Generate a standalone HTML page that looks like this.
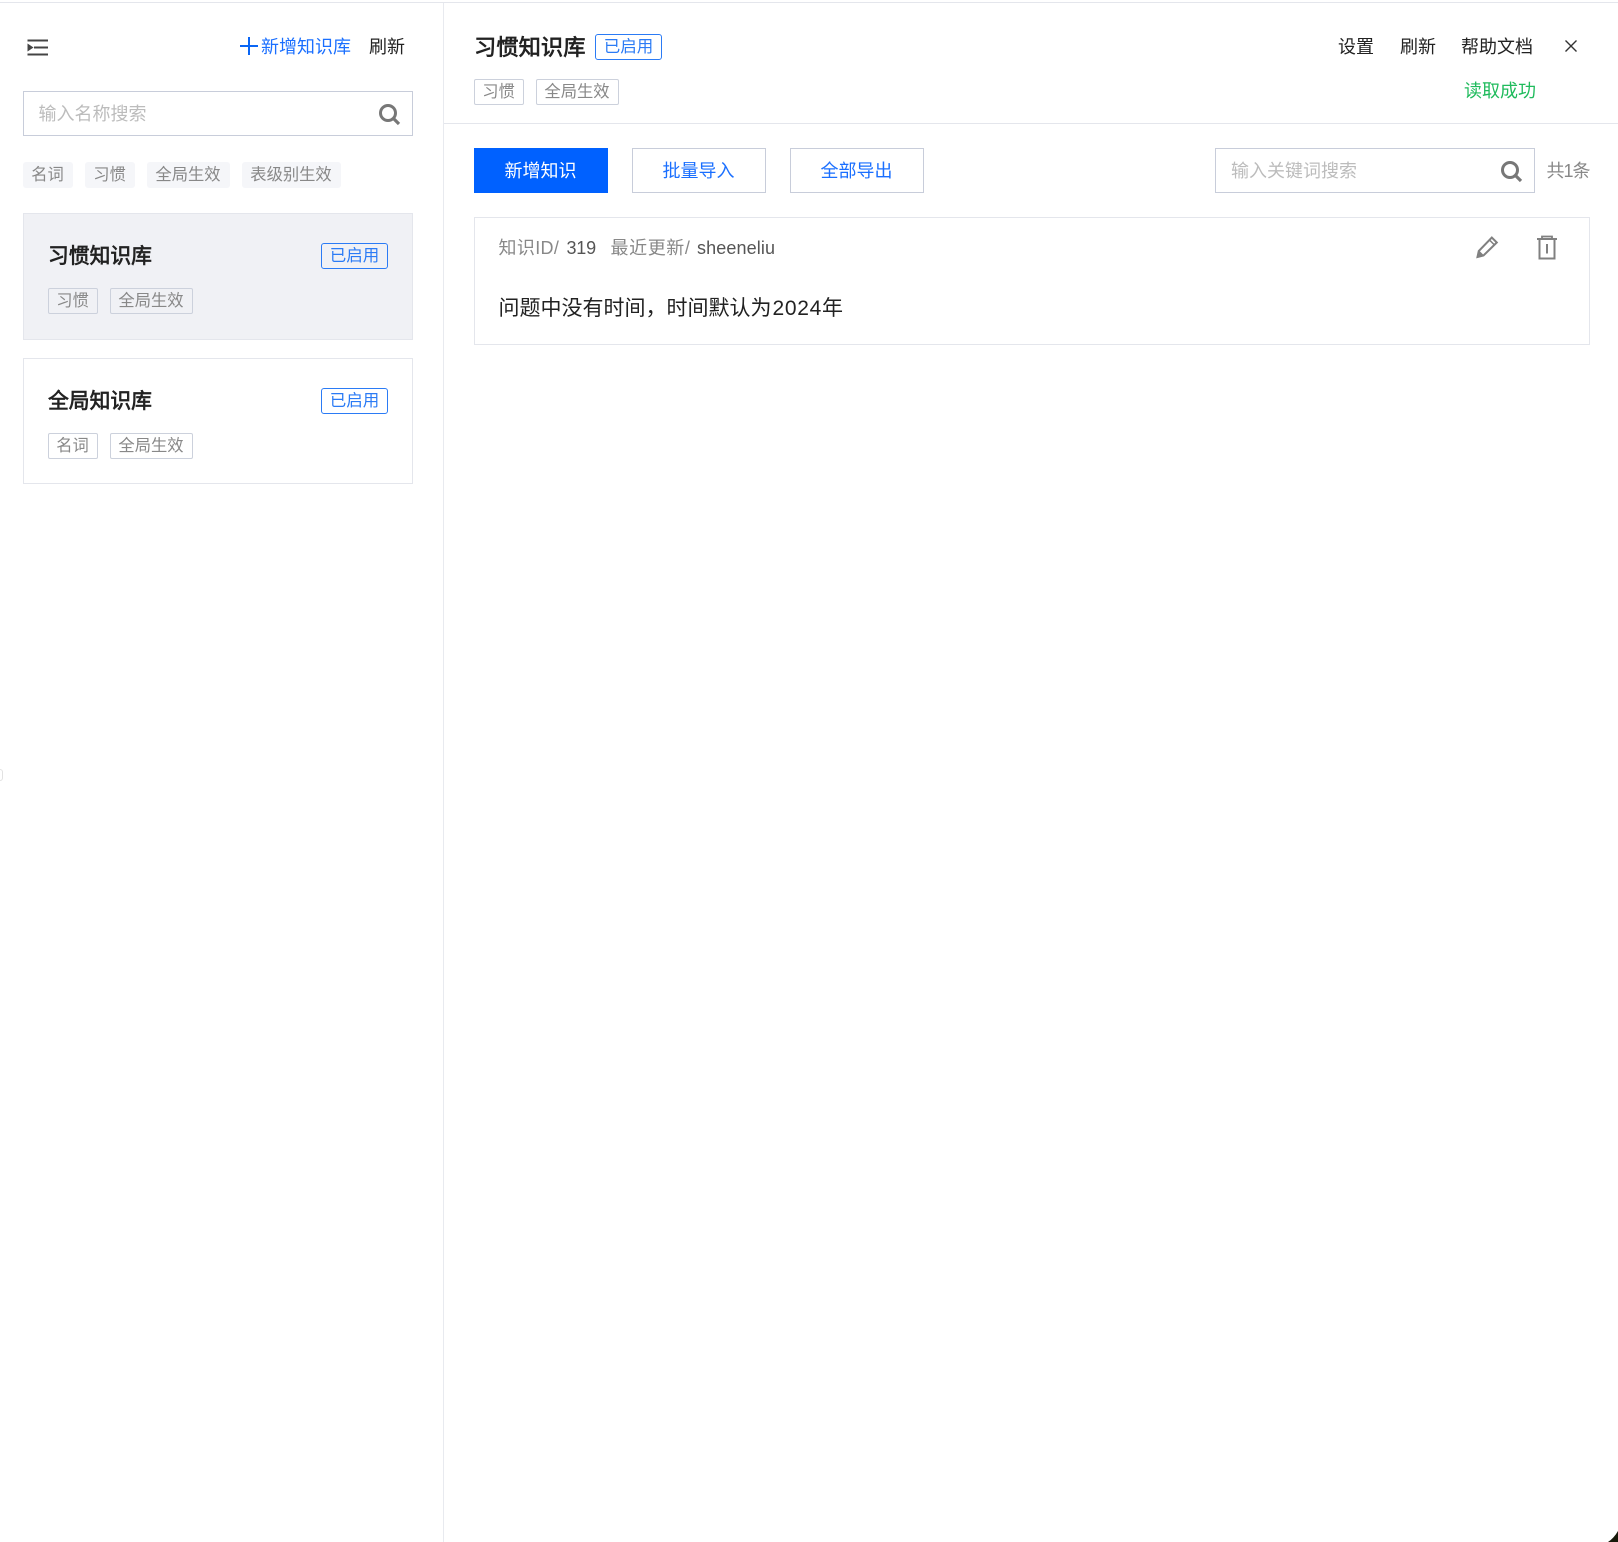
<!DOCTYPE html>
<html lang="zh-CN">
<head>
<meta charset="utf-8">
<title>知识库</title>
<style>
html,body{margin:0;padding:0;width:1618px;height:1542px;overflow:hidden;background:#fff}
body{position:relative;font-family:"Liberation Sans","Noto Sans CJK SC",sans-serif;color:#222}
.a{position:absolute;box-sizing:border-box;white-space:nowrap}
.t{position:absolute;white-space:nowrap}
.box{position:absolute;box-sizing:border-box}
.tag{position:absolute;box-sizing:border-box;height:26px;line-height:24px;font-size:16.3px;color:#888;text-align:center;border:1px solid #ccd1dc;border-radius:2px;white-space:nowrap;padding-right:1px}
.ftag{position:absolute;box-sizing:border-box;height:26px;line-height:26px;font-size:16.3px;color:#888;text-align:center;background:#f5f6f9;border-radius:3px;white-space:nowrap;padding-right:1px}
.badge{position:absolute;box-sizing:border-box;width:67px;height:26px;line-height:24px;font-size:16.5px;color:#2b7bf5;text-align:center;border:1px solid #2b7bf5;border-radius:3px;white-space:nowrap}
.btn{position:absolute;box-sizing:border-box;top:148px;width:134px;height:45px;line-height:44px;font-size:18px;text-align:center;color:#1a6fff;border:1px solid #c8cdda;white-space:nowrap;padding-right:1px}
.ti{font-weight:400;color:#222;line-height:30px;-webkit-text-stroke:.7px #222}
</style>
</head>
<body>
<div class="box" style="left:0;top:2px;width:1618px;height:1px;background:#e4e6ec"></div>
<div class="box" style="left:443px;top:3px;width:1px;height:1539px;background:#e8eaef"></div>
<div class="box" style="left:444px;top:123px;width:1174px;height:1px;background:#e4e6ec"></div>

<svg class="a" style="left:26px;top:38px" width="24" height="20" viewBox="0 0 24 20">
<path d="M1.500 2.500H22M8 9.500H22M1.500 16.500H22" stroke="#444" stroke-width="2" fill="none"/>
<path d="M1.500 5.500L7.500 9.500L1.500 13.500Z" fill="#444"/>
</svg>
<svg class="a" style="left:240px;top:37px" width="18" height="18" viewBox="0 0 18 18"><path d="M9 0V18M0 9H18" stroke="#0a66f5" stroke-width="2" fill="none"/></svg>
<span class="t" style="left:261px;top:33px;font-size:18px;line-height:28px;color:#1a6fff">新增知识库</span>
<span class="t" style="left:369px;top:33px;font-size:18px;line-height:28px;color:#222">刷新</span>

<div class="box" style="left:23px;top:91px;width:390px;height:45px;border:1px solid #c8cdda"></div>
<span class="t" style="left:38.500px;top:101px;font-size:18px;line-height:27px;color:#bcbcbc">输入名称搜索</span>
<svg class="a" style="left:378px;top:103px" width="24" height="24" viewBox="0 0 24 24"><circle cx="10" cy="10" r="7.500" stroke="#777" stroke-width="3" fill="none"/><path d="M15.500 15.500L21 21" stroke="#777" stroke-width="3.200" fill="none"/></svg>

<div class="ftag" style="left:23px;top:162px;width:50px">名词</div>
<div class="ftag" style="left:85px;top:162px;width:50px">习惯</div>
<div class="ftag" style="left:147px;top:162px;width:83px">全局生效</div>
<div class="ftag" style="left:242px;top:162px;width:99px">表级别生效</div>

<div class="box" style="left:23px;top:213px;width:390px;height:127px;background:#f0f1f5;border:1px solid #e4e6ec"></div>
<span class="t ti" style="left:48px;top:242px;font-size:20.800px">习惯知识库</span>
<div class="badge" style="left:321px;top:243px">已启用</div>
<div class="tag" style="left:48px;top:288px;width:50px">习惯</div>
<div class="tag" style="left:110px;top:288px;width:83px">全局生效</div>

<div class="box" style="left:23px;top:358px;width:390px;height:126px;border:1px solid #e4e6ec"></div>
<span class="t ti" style="left:48px;top:387px;font-size:20.800px">全局知识库</span>
<div class="badge" style="left:321px;top:388px">已启用</div>
<div class="tag" style="left:48px;top:433px;width:50px">名词</div>
<div class="tag" style="left:110px;top:433px;width:83px">全局生效</div>

<span class="t ti" style="left:474px;top:33px;font-size:22.300px">习惯知识库</span>
<div class="badge" style="left:595px;top:34px">已启用</div>
<div class="tag" style="left:474px;top:79px;width:50px">习惯</div>
<div class="tag" style="left:536px;top:79px;width:83px">全局生效</div>

<span class="t" style="left:1338px;top:33px;font-size:18px;line-height:28px">设置</span>
<span class="t" style="left:1400px;top:33px;font-size:18px;line-height:28px">刷新</span>
<span class="t" style="left:1461px;top:33px;font-size:18px;line-height:28px">帮助文档</span>
<svg class="a" style="left:1564px;top:39px" width="14" height="14" viewBox="0 0 14 14"><path d="M1.500 1.500L12.500 12.500M12.500 1.500L1.500 12.500" stroke="#333" stroke-width="1.400" fill="none"/></svg>
<span class="t" style="left:1464px;top:77px;font-size:18px;line-height:28px;color:#1fbb5c">读取成功</span>

<div class="box" style="left:474px;top:148px;width:134px;height:45px;background:#0061ff;color:#fff;font-size:18px;line-height:46px;text-align:center;padding-right:1px">新增知识</div>
<div class="btn" style="left:632px">批量导入</div>
<div class="btn" style="left:790px">全部导出</div>

<div class="box" style="left:1215px;top:148px;width:320px;height:45px;border:1px solid #c8cdda"></div>
<span class="t" style="left:1231px;top:158px;font-size:18px;line-height:27px;color:#bcbcbc">输入关键词搜索</span>
<svg class="a" style="left:1500px;top:160px" width="24" height="24" viewBox="0 0 24 24"><circle cx="10" cy="10" r="7.500" stroke="#777" stroke-width="3" fill="none"/><path d="M15.500 15.500L21 21" stroke="#777" stroke-width="3.200" fill="none"/></svg>
<span class="t" style="left:1546.500px;top:158px;font-size:18px;line-height:27px;color:#888;letter-spacing:-1px">共1条</span>

<div class="box" style="left:474px;top:217px;width:1116px;height:128px;border:1px solid #e4e6ec"></div>
<span class="t" style="left:498.500px;top:235px;font-size:18px;line-height:27px;color:#888;letter-spacing:.35px">知识ID/</span>
<span class="t" style="left:566.500px;top:235px;font-size:18px;line-height:27px;color:#555;letter-spacing:-.2px">319</span>
<span class="t" style="left:610.500px;top:235px;font-size:18px;line-height:27px;color:#888;letter-spacing:.6px">最近更新/</span>
<span class="t" style="left:697px;top:235px;font-size:18px;line-height:27px;color:#555;letter-spacing:.12px">sheeneliu</span>
<span class="t" style="left:498.500px;top:293px;font-size:21px;line-height:31px;color:#222">问题中没有时间，时间默认为<span style="letter-spacing:.7px;margin-left:1px">2024</span>年</span>

<svg class="a" style="left:1474px;top:234px" width="26" height="26" viewBox="0 0 26 26">
<path d="M3.500 23L4.800 17L17.800 3.500L22.800 8.500L9.500 21.500Z" stroke="#808080" stroke-width="2" fill="none"/>
<path d="M15.500 6L20.500 11M3.500 23L9 21.500L5 17.500Z" stroke="#808080" stroke-width="1.500" fill="#808080"/>
</svg>
<svg class="a" style="left:1535px;top:234px" width="24" height="26" viewBox="0 0 24 26">
<path d="M2 5H22" stroke="#808080" stroke-width="2" fill="none"/>
<path d="M7 5V2.500H17V5" stroke="#808080" stroke-width="1.800" fill="none"/>
<path d="M4.500 5V24.500H19.500V5" stroke="#808080" stroke-width="2" fill="none"/>
<path d="M12 10V19.500" stroke="#808080" stroke-width="2" fill="none"/>
</svg>

<div class="box" style="left:0;top:769px;width:3px;height:12px;border:1px solid #e2e2e2;border-left:0;border-radius:0 4px 4px 0"></div>
<svg class="a" style="left:1606px;top:1530px" width="12" height="12" viewBox="0 0 12 12"><path d="M12 1Q8 8 2 12H12Z" fill="#17190a"/></svg>
</body>
</html>
